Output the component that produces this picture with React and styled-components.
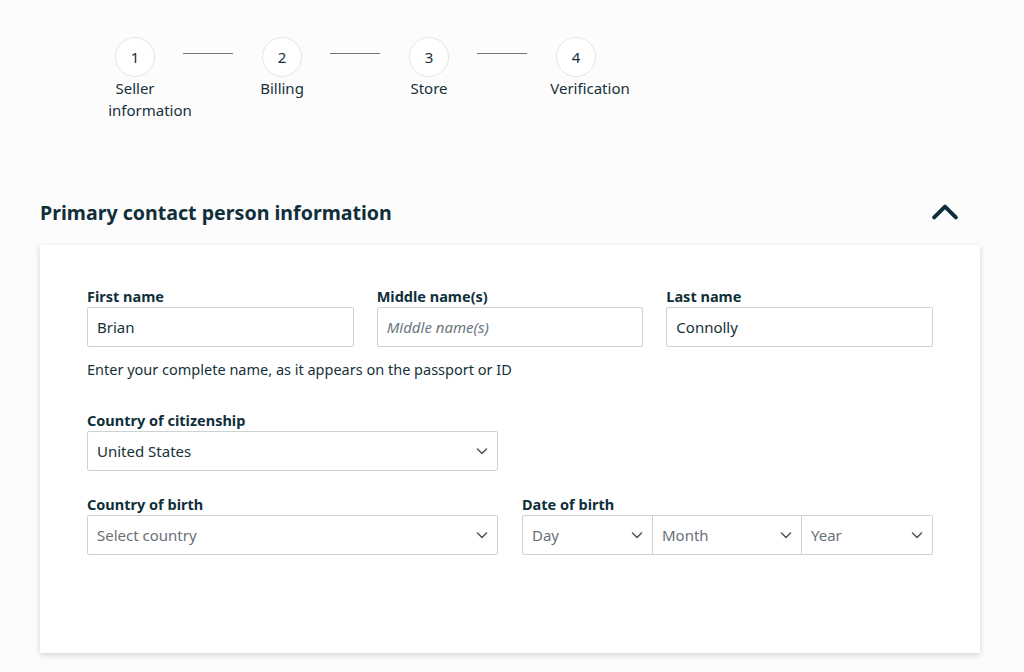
import React from "react";
import styled, { createGlobalStyle } from "styled-components";

const Global = createGlobalStyle`
  html, body { margin: 0; padding: 0; background: #fcfcfc; }
  body { font-family: "Noto Sans", "Open Sans", sans-serif; color: #16191f; }
  * { box-sizing: border-box; }
`;

const Page = styled.div`
  width: 1024px;
  height: 672px;
  overflow: hidden;
  padding: 37px 44px 0 40px;
`;

const Stepper = styled.div`
  display: flex;
  align-items: flex-start;
  margin-left: 75px;
`;

const Step = styled.div`
  width: 40px;
  display: flex;
  flex-direction: column;
  align-items: center;
`;

const Circle = styled.div`
  width: 40px;
  height: 40px;
  border-radius: 50%;
  border: 1px solid #e3e6e6;
  background: #fff;
  display: flex;
  align-items: center;
  justify-content: center;
  font-size: 15px;
  color: #16313a;
`;

const StepLabel = styled.div`
  display: flex;
  flex-direction: column;
  align-items: center;
  font-size: 15px;
  line-height: 22px;
  color: #16313a;
  white-space: nowrap;
`;

const LabelLine = styled.span`
  margin-left: ${(p) => (p.$shift || 0) * 2}px;
`;

const Connector = styled.div`
  width: 50px;
  height: 1px;
  background: #6b7780;
  margin: 16px 29px 0 28px;
  flex: none;
`;

const SectionHeader = styled.div`
  display: flex;
  align-items: center;
  justify-content: space-between;
  margin-top: 71px;
  height: 40px;
  padding-right: 22px;
`;

const SectionTitle = styled.h2`
  margin: 0;
  font-size: 19.6px;
  font-weight: 700;
  color: #0f2f3a;
`;

const Card = styled.div`
  margin-top: 13px;
  background: #fff;
  box-shadow: 0 2px 6px rgba(0, 0, 0, 0.16);
  padding: 41px 47px 0 47px;
  height: 408px;
`;

const Grid = styled.div`
  display: grid;
  grid-template-columns: repeat(${(p) => p.$cols}, 1fr);
  column-gap: ${(p) => p.$gap}px;
  margin-top: ${(p) => p.$mt || 0}px;
`;

const Field = styled.div`
  display: flex;
  flex-direction: column;
`;

const Label = styled.label`
  font-size: 14.5px;
  font-weight: 700;
  line-height: 20px;
  color: #0f2f3a;
  margin-bottom: 1px;
`;

const Input = styled.input`
  height: 40px;
  border: 1px solid #cdd3d3;
  border-radius: 2px;
  padding: 0 9px;
  font-family: inherit;
  font-size: 15px;
  color: #16313a;
  background: #fff;
  outline: none;
  &::placeholder {
    color: #6b7780;
    font-style: italic;
  }
`;

const Help = styled.div`
  margin-top: 12px;
  font-size: 14.5px;
  line-height: 20px;
  color: #16313a;
`;

const SelectBox = styled.div`
  height: 40px;
  border: 1px solid #cdd3d3;
  border-radius: 2px;
  background: #fff;
  display: flex;
  align-items: center;
  justify-content: space-between;
  padding: 0 9px 0 9px;
  font-size: 15px;
  color: ${(p) => (p.$placeholder ? "#687078" : "#16313a")};
`;

const DateGroup = styled.div`
  display: flex;
  height: 40px;
  border: 1px solid #cdd3d3;
  border-radius: 2px;
  background: #fff;
`;

const DatePart = styled.div`
  width: ${(p) => p.$w}px;
  flex: ${(p) => (p.$grow ? 1 : "none")};
  display: flex;
  align-items: center;
  justify-content: space-between;
  padding: 0 9px 0 9px;
  font-size: 15px;
  color: #687078;
  & + & {
    border-left: 1px solid #cdd3d3;
  }
`;

const Chevron = ({ up, size = 12, color = "#545b64", stroke = 1.6 }) => (
  <svg width={size} height={size} viewBox="0 0 12 12" fill="none">
    <path
      d={up ? "M1 8.5 L6 3.5 L11 8.5" : "M1.5 4 L6 8.5 L10.5 4"}
      stroke={color}
      strokeWidth={stroke}
      strokeLinecap="round"
      strokeLinejoin="round"
    />
  </svg>
);

const steps = [
  { n: 1, lines: [["Seller", 0], ["information", 15]] },
  { n: 2, lines: [["Billing", 0]] },
  { n: 3, lines: [["Store", 0]] },
  { n: 4, lines: [["Verification", 14]] },
];

export default function App() {
  return (
    <>
      <Global />
      <Page>
        <Stepper>
          {steps.map((s, i) => (
            <React.Fragment key={s.n}>
              {i > 0 && <Connector />}
              <Step>
                <Circle>{s.n}</Circle>
                <StepLabel>
                  {s.lines.map(([t, sh]) => (
                    <LabelLine key={t} $shift={sh}>
                      {t}
                    </LabelLine>
                  ))}
                </StepLabel>
              </Step>
            </React.Fragment>
          ))}
        </Stepper>

        <SectionHeader>
          <SectionTitle>Primary contact person information</SectionTitle>
          <Chevron up size={26} color="#0f2f3a" stroke={1.8} />
        </SectionHeader>

        <Card>
          <Grid $cols={3} $gap={23}>
            <Field>
              <Label>First name</Label>
              <Input defaultValue="Brian" />
            </Field>
            <Field>
              <Label>Middle name(s)</Label>
              <Input placeholder="Middle name(s)" />
            </Field>
            <Field>
              <Label>Last name</Label>
              <Input defaultValue="Connolly" />
            </Field>
          </Grid>
          <Help>Enter your complete name, as it appears on the passport or ID</Help>

          <Grid $cols={2} $gap={24} $mt={31}>
            <Field>
              <Label>Country of citizenship</Label>
              <SelectBox>
                United States
                <Chevron />
              </SelectBox>
            </Field>
          </Grid>

          <Grid $cols={2} $gap={24} $mt={23}>
            <Field>
              <Label>Country of birth</Label>
              <SelectBox $placeholder>
                Select country
                <Chevron />
              </SelectBox>
            </Field>
            <Field>
              <Label>Date of birth</Label>
              <DateGroup>
                <DatePart $w={129}>
                  Day
                  <Chevron />
                </DatePart>
                <DatePart $w={149}>
                  Month
                  <Chevron />
                </DatePart>
                <DatePart $grow>
                  Year
                  <Chevron />
                </DatePart>
              </DateGroup>
            </Field>
          </Grid>
        </Card>
      </Page>
    </>
  );
}
